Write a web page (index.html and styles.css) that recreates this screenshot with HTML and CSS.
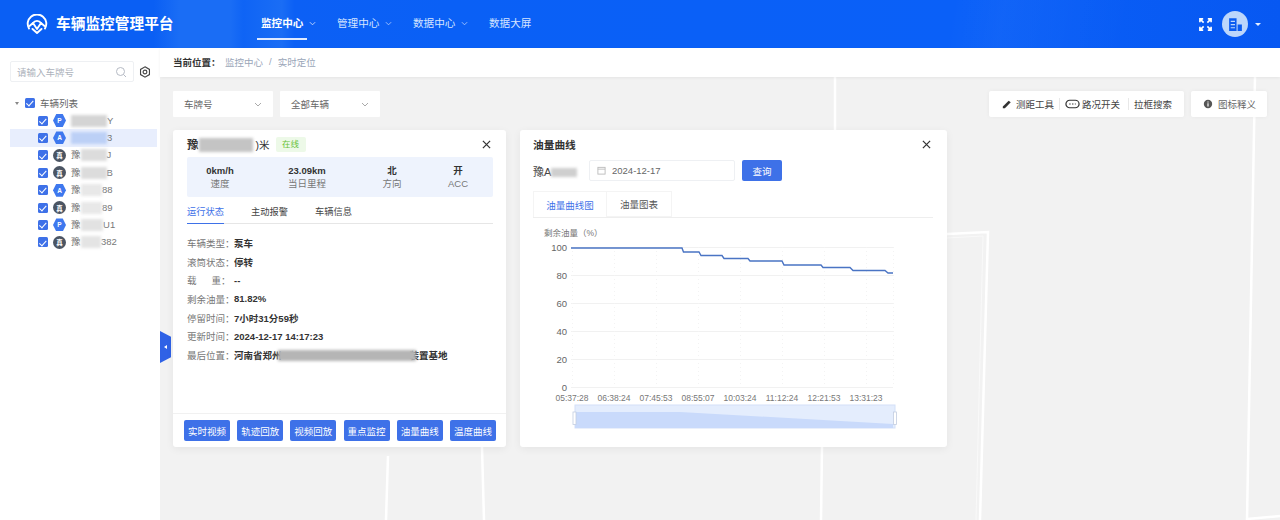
FILE: index.html
```html
<!DOCTYPE html>
<html lang="zh-CN">
<head>
<meta charset="utf-8">
<title>车辆监控管理平台</title>
<link rel="stylesheet" href="styles.css">
</head>
<body>
<div class="app">
  <header class="header">
    <div class="brand">
      <svg class="logo" viewBox="0 0 22 20" fill="none" stroke="#fff" stroke-width="1.9" stroke-linecap="round" stroke-linejoin="round"><path d="M3 14.500A9.300 9.300 0 1 1 19 14.500"/><path d="M7 9A4.800 4.800 0 0 1 15 9"/><path d="M3.500 12 7 9 11 15 15 9 18.500 12"/><path d="M6.500 15 11 19 15.500 15"/></svg>
      <span class="brand-name">车辆监控管理平台</span>
    </div>
    <nav class="nav">
      <a class="nav-item active">监控中心<svg class="nav-chev" viewBox="0 0 8 5" fill="none" stroke="currentColor"><path d="M1 1 4 4 7 1"/></svg></a>
      <a class="nav-item">管理中心<svg class="nav-chev" viewBox="0 0 8 5" fill="none" stroke="currentColor"><path d="M1 1 4 4 7 1"/></svg></a>
      <a class="nav-item">数据中心<svg class="nav-chev" viewBox="0 0 8 5" fill="none" stroke="currentColor"><path d="M1 1 4 4 7 1"/></svg></a>
      <a class="nav-item">数据大屏</a>
    </nav>
    <div class="user">
      <svg class="full" viewBox="0 0 14 14" fill="none" stroke="#fff" stroke-width="1.8"><path d="M1 4.500V1H4.500M1 1 5 5M9.500 1H13V4.500M13 1 9 5M1 9.500V13H4.500M1 13 5 9M13 9.500V13H9.500M13 13 9 9"/></svg>
      <div class="avatar"><svg viewBox="0 0 16 14"><path fill="#0b5cf0" d="M2 1H9V13H2zM10 7H14V13H10z"/><path fill="#bcd6fb" d="M3.500 3.500H7.500V4.600H3.500zM3.500 6.500H7.500V7.600H3.500zM3.500 9.500H7.500V10.600H3.500z"/></svg></div>
      <span class="caret"></span>
    </div>
  </header>
  <div class="content">
    <aside class="sidebar">
      <div class="search-row">
        <div class="search"><span>请输入车牌号</span><svg viewBox="0 0 12 12" fill="none" stroke="#b5bac4"><circle cx="5.500" cy="5.500" r="4"/><path d="M8.500 8.500 11 11"/></svg></div>
        <svg class="gear" viewBox="0 0 14 14" fill="none" stroke="#444" stroke-width="1.300"><path d="M7 1 12.200 4V10L7 13 1.800 10V4Z"/><circle cx="7" cy="7" r="2.200"/></svg>
      </div>
      <div class="tree">
        <div class="tree-row root"><span class="arrow"></span><span class="cb"></span><span>车辆列表</span></div>
        <div class="tree-row"><span class="cb"></span><span class="veh hex">P</span><span class="plate"><i class="mask m-36"></i>Y</span></div>
        <div class="tree-row selected"><span class="cb"></span><span class="veh hex">A</span><span class="plate"><i class="mask blue m-36"></i>3</span></div>
        <div class="tree-row"><span class="cb"></span><span class="veh dark">真</span><span class="plate">豫<i class="mask m-26"></i>J</span></div>
        <div class="tree-row"><span class="cb"></span><span class="veh dark">真</span><span class="plate">豫<i class="mask m-26"></i>B</span></div>
        <div class="tree-row"><span class="cb"></span><span class="veh hex">A</span><span class="plate">豫<i class="mask m-21"></i>88</span></div>
        <div class="tree-row"><span class="cb"></span><span class="veh dark">真</span><span class="plate">豫<i class="mask m-21"></i>89</span></div>
        <div class="tree-row"><span class="cb"></span><span class="veh hex">P</span><span class="plate">豫<i class="mask m-22"></i>U1</span></div>
        <div class="tree-row"><span class="cb"></span><span class="veh dark">真</span><span class="plate">豫<i class="mask m-20"></i>382</span></div>
      </div>
    </aside>
    <main class="main">
      <div class="crumb"><b>当前位置：</b><span>监控中心</span><em>/</em><span>实时定位</span></div>
      <div class="map">
        <svg class="roads" viewBox="160 77 1120 443" fill="none" stroke="#fff" stroke-width="2.500">
          <path d="M835 77V130"/>
          <path d="M947 234 988 232 980 520"/>
          <path d="M947 238 983 236 976 520" class="road-thin"/>
          <path d="M1255 77 1247 520"/>
          <path d="M1247 519 1280 516"/>
          <path d="M822 447 821 520"/>
          <path d="M388 456 386 520"/>
          <path d="M482 447 484 520"/>
        </svg>
        <div class="side-tab"><span></span></div>
        <div class="toolbar">
          <div class="selects">
            <div class="select"><span>车牌号</span><svg viewBox="0 0 8 5" fill="none" stroke="#aaa"><path d="M1 1 4 4 7 1"/></svg></div>
            <div class="select"><span>全部车辆</span><svg viewBox="0 0 8 5" fill="none" stroke="#aaa"><path d="M1 1 4 4 7 1"/></svg></div>
          </div>
          <div class="tools">
            <div class="tool-box">
              <span class="tool t-measure"><svg viewBox="0 0 12 12"><path fill="#333" d="M1 9 8 2 10.500 4 3.500 11H1z"/></svg>测距工具</span>
              <span class="tool t-traffic"><svg class="wide" viewBox="0 0 16 10" fill="none" stroke="#333" stroke-width="1.300"><rect x="1" y="1" width="14" height="8" rx="4"/><path d="M4.500 5H11.500" stroke-dasharray="1.500 1.500"/></svg>路况开关</span>
              <span class="tool">拉框搜索</span>
            </div>
            <div class="tool-box legend">
              <span class="tool"><svg viewBox="0 0 12 12"><circle cx="6" cy="6" r="5" fill="#555"/><path stroke="#fff" stroke-width="1.400" d="M6 5.200V9M6 3V4.300"/></svg>图标释义</span>
            </div>
          </div>
        </div>
        <div class="panels">
          <section class="panel info">
            <div class="info-head">
              <span class="info-title">豫<i class="mask m-54"></i><span class="title-end">)米</span></span><span class="tag">在线</span>
              <svg class="close" viewBox="0 0 10 10" fill="none" stroke="#333" stroke-width="1.400"><path d="M1 1 9 9M9 1 1 9"/></svg>
            </div>
            <div class="stats">
              <div class="stat"><b>0km/h</b><span>速度</span></div>
              <div class="stat"><b>23.09km</b><span>当日里程</span></div>
              <div class="stat"><b>北</b><span>方向</span></div>
              <div class="stat"><b>开</b><span>ACC</span></div>
            </div>
            <div class="tabs">
              <span class="tab active">运行状态</span><span class="tab">主动报警</span><span class="tab">车辆信息</span>
            </div>
            <dl class="rows">
              <div class="row"><dt>车辆类型：</dt><dd>泵车</dd></div>
              <div class="row"><dt>滚筒状态：</dt><dd>停转</dd></div>
              <div class="row"><dt class="spread"><span>载</span><span>重：</span></dt><dd>--</dd></div>
              <div class="row"><dt>剩余油量：</dt><dd>81.82%</dd></div>
              <div class="row"><dt>停留时间：</dt><dd>7小时31分59秒</dd></div>
              <div class="row"><dt>更新时间：</dt><dd>2024-12-17 14:17:23</dd></div>
              <div class="row"><dt>最后位置：</dt><dd>河南省郑州<i class="mask dim m-138"></i>装置基地</dd></div>
            </dl>
            <div class="actions">
              <button class="btn">实时视频</button><button class="btn">轨迹回放</button><button class="btn">视频回放</button><button class="btn">重点监控</button><button class="btn">油量曲线</button><button class="btn">温度曲线</button>
            </div>
          </section>
          <section class="panel oil">
            <div class="oil-head"><span>油量曲线</span><svg class="close" viewBox="0 0 10 10" fill="none" stroke="#333" stroke-width="1.400"><path d="M1 1 9 9M9 1 1 9"/></svg></div>
            <div class="query">
              <span class="plate-q">豫A<i class="mask m-30"></i></span>
              <div class="date"><svg viewBox="0 0 10 10" fill="none" stroke="#bbb"><rect x="1" y="1.500" width="8" height="7.500"/><path d="M1 3.500H9"/></svg>2024-12-17</div>
              <button class="btn query-btn">查询</button>
            </div>
            <div class="oil-tabs"><span class="oil-tab active">油量曲线图</span><span class="oil-tab">油量图表</span></div>
            <svg class="chart" viewBox="530 222 403 210">
              <text class="axis-name" x="544" y="236">剩余油量（%）</text>
              <g class="grid-h"><path d="M571 247.500H893M571 275.500H893M571 303.500H893M571 331.500H893M571 359.500H893M571 387.500H893"/></g>
              <g class="grid-v"><path d="M572.500 247V387M614.500 247V387M656.500 247V387M698.500 247V387M740.500 247V387M782.500 247V387M824.500 247V387M866.500 247V387M893.500 247V387"/></g>
              <g class="y-labels">
                <text x="567" y="250.500">100</text><text x="567" y="278.500">80</text><text x="567" y="306.500">60</text><text x="567" y="334.500">40</text><text x="567" y="362.500">20</text><text x="567" y="390.500">0</text>
              </g>
              <g class="x-labels">
                <text x="572" y="401">05:37:28</text><text x="614" y="401">06:38:24</text><text x="656" y="401">07:45:53</text><text x="698" y="401">08:55:07</text><text x="740" y="401">10:03:24</text><text x="782" y="401">11:12:24</text><text x="824" y="401">12:21:53</text><text x="866" y="401">13:31:23</text>
              </g>
              <path class="oil-line" d="M571 248H682L683.500 252H699L701 255.500H722L724 258.500H748L750 261H782L784 265H821L823 267.500H850L853 270.500H885L888 273H893"/>
              <rect class="zoom-bg" x="575" y="405" width="320" height="23"/>
              <path class="zoom-data" d="M575 412H680L893 424V428H575Z"/>
              <rect class="zoom-handle" x="573" y="412" width="3" height="12.500"/>
              <rect class="zoom-handle" x="893.500" y="412" width="3" height="12.500"/>
            </svg>
          </section>
        </div>
      </div>
    </main>
  </div>
</div>
</body>
</html>
```
FILE: styles.css
```css
* { box-sizing: border-box; }
html, body { margin: 0; padding: 0; }
body { font-family: "Liberation Sans", "Noto Sans CJK SC", sans-serif; font-size: 9.5px; color: #555; background: #f2f2f2; }
i, em { font-style: normal; }
.app { width: 1280px; height: 520px; display: flex; flex-direction: column; overflow: hidden; }

/* header */
.header { height: 48px; flex: none; display: flex; align-items: center; color: #fff;
  background:
    linear-gradient(100deg, rgba(255,255,255,0) 74%, rgba(255,255,255,.03) 78%, rgba(255,255,255,0) 88%),
    linear-gradient(90deg, #0a5ff4 0%, #0a5ff4 12%, #1a6df5 14%, #1a6df5 18%, #0f64f5 19%, #1a6df5 22%, #0c60f5 23%, #0a60f6 35%, #0a60f8 75%, #0758f2 100%); }
.brand { width: 257px; padding-left: 26px; display: flex; align-items: center; gap: 8px; flex: none; }
.logo { width: 22px; height: 20px; }
.brand-name { font-size: 14.7px; font-weight: 700; line-height: 20px; white-space: nowrap; }
.nav { display: flex; height: 48px; }
.nav-item { position: relative; width: 76px; padding: 0 0 2px 4px; display: flex; align-items: center; font-size: 10.6px; line-height: 48px; color: #d5e4ff; }
.nav-item.active { color: #fff; font-weight: 700; }
.nav-item.active::after { content: ""; position: absolute; left: 0; bottom: 8px; width: 50px; height: 2px; background: #dfeaff; }
.nav-chev { width: 7px; height: 5px; margin-left: 6px; opacity: .8; }
.user { margin-left: auto; padding-right: 19px; display: flex; align-items: center; }
.full { width: 13px; height: 13px; margin-right: 10px; }
.avatar { width: 26px; height: 26px; border-radius: 50%; background: #bcd6fb; display: flex; align-items: center; justify-content: center; }
.avatar svg { width: 17px; height: 15px; }
.caret { width: 0; height: 0; margin-left: 7px; border: 3px solid transparent; border-top: 3.5px solid #e6efff; border-bottom: 0; }

/* sidebar */
.content { flex: 1; display: flex; min-height: 0; }
.sidebar { width: 160px; flex: none; background: #fff; padding: 13px 3px 0 10px; }
.search-row { display: flex; align-items: center; gap: 5px; }
.search { width: 124px; height: 21px; border: 1px solid #eef0f3; border-radius: 2px; padding: 0 6px; display: flex; align-items: center; justify-content: space-between; color: #aeb3bc; }
.search svg { width: 12px; height: 12px; }
.gear { width: 12px; height: 12px; flex: none; }
.tree { margin-top: 12.5px; }
.tree-row { height: 17.4px; padding-left: 28px; display: flex; align-items: center; gap: 5px; color: #666; }
.tree-row.root { padding-left: 5px; }
.arrow { width: 0; height: 0; margin-right: 1px; border: 2.5px solid transparent; border-top: 3.5px solid #888; border-bottom: 0; }
.cb { width: 10px; height: 10px; flex: none; border-radius: 1.5px; background: #3e71e8; position: relative; }
.cb::after { content: ""; position: absolute; left: 3.2px; top: 1.2px; width: 3px; height: 5.5px; border: solid #fff; border-width: 0 1.2px 1.2px 0; transform: rotate(42deg); }
.veh { width: 13px; height: 13px; flex: none; display: flex; align-items: center; justify-content: center; color: #fff; font-size: 6.5px; font-weight: 700; }
.veh.hex { background: #3e78ee; clip-path: polygon(25% 0, 75% 0, 100% 50%, 75% 100%, 25% 100%, 0 50%); }
.veh.dark { background: #4b5563; border-radius: 50%; }
.plate { display: flex; align-items: center; font-size: 9.5px; color: #777; white-space: nowrap; line-height: 14px; }
.selected { background: #e8eefd; }
.mask { display: inline-block; height: 12px; background: #d4d4d4; filter: blur(1.5px); flex: none; }
.mask.blue { background: #bcd0f6; }
.mask.dim { background: #b5b5b5; height: 11px; vertical-align: -2px; margin: 0 -6px 0 -4px; }
.m-20 { width: 20.5px; background: #e4e4e4; }
.m-21 { width: 21.5px; background: #e8e8e8; }
.m-22 { width: 22.5px; background: #e2e2e2; }
.m-26 { width: 26px; background: #dcdcdc; }
.m-30 { width: 26px; background: #cfcfcf; height: 9px; vertical-align: -1px; }
.m-36 { width: 36px; }
.m-54 { width: 54px; background: #c4c4c4; height: 14px; vertical-align: -2px; }
.m-138 { width: 138px; }

/* main */
.main { flex: 1; display: flex; flex-direction: column; min-width: 0; }
.crumb { height: 29px; flex: none; background: #fff; padding: 0 0 2px 13px; display: flex; align-items: center; color: #9aa6b8; box-shadow: 0 1px 3px rgba(0,0,0,.06); position: relative; z-index: 1; }
.crumb b { color: #333; font-weight: 700; width: 52px; }
.crumb em { margin: 0 6px; }
.map { position: relative; flex: 1; min-height: 0; padding: 14px 13px 0; background: #f2f2f2; overflow: hidden; }
.roads { position: absolute; left: 0; top: 0; width: 1120px; height: 443px; }
.road-thin { stroke: #f9f9f9; stroke-width: 1; }
.side-tab { position: absolute; left: 0; top: 254px; width: 11px; height: 32px; background: #2f62e6; clip-path: polygon(0 0, 100% 18%, 100% 82%, 0 100%); display: flex; align-items: center; justify-content: center; }
.side-tab span { width: 0; height: 0; border: 2.5px solid transparent; border-right: 3px solid #fff; border-left: 0; }
.toolbar { position: relative; display: flex; justify-content: space-between; height: 26px; }
.selects { display: flex; gap: 7px; }
.select { width: 100px; height: 26px; background: #fff; padding: 0 11px; display: flex; align-items: center; justify-content: space-between; color: #666; border-radius: 1px; }
.select svg { width: 8px; height: 5px; }
.tools { display: flex; gap: 7px; }
.tool-box { height: 26px; background: #fff; border-radius: 2px; display: flex; align-items: center; padding: 0 12px 0 13px; box-shadow: 0 0 4px rgba(0,0,0,.05); }
.tool { display: flex; align-items: center; gap: 4px; color: #444; position: relative; white-space: nowrap; }
.t-measure { padding-right: 11px; }
.t-traffic { padding-right: 14px; gap: 2px; }
.tool:not(:last-child)::after { content: ""; position: absolute; right: 5px; top: 1px; bottom: 1px; width: 1px; background: #e8e8e8; }
.tool svg { width: 10px; height: 10px; }
.tool svg.wide { width: 15px; height: 10px; }
.legend { padding: 0 11px 0 12px; }
.legend .tool { color: #666; gap: 5px; }
.panels { position: relative; display: flex; gap: 14px; margin-top: 13px; align-items: flex-start; }
.panel { background: #fff; border-radius: 3px; box-shadow: 0 2px 8px rgba(0,0,0,.06); height: 317px; }

/* info panel */
.info { width: 333px; padding: 6px 13px 0 14px; display: flex; flex-direction: column; }
.info-head { height: 17px; display: flex; align-items: center; }
.info-title { font-size: 11.5px; font-weight: 700; color: #333; white-space: nowrap; display: flex; align-items: center; line-height: 16px; }
.title-end { font-weight: 400; font-size: 10.5px; margin-left: 3px; }
.tag { margin-left: 6px; width: 30px; height: 15px; background: #edf9e8; color: #67c23a; font-size: 8.5px; line-height: 15px; text-align: center; border-radius: 2px; }
.close { width: 9px; height: 9px; margin-left: auto; margin-right: 2px; }
.stats { height: 40px; margin-top: 4px; background: #eef3fd; display: grid; grid-template-columns: 66px 108px 62px 70px; text-align: center; align-content: center; border-radius: 2px; }
.stat { display: flex; flex-direction: column; align-items: center; line-height: 13px; }
.stat b { color: #333; font-weight: 700; }
.stat span { color: #777; }
.tabs { margin-top: 8px; height: 19px; display: flex; gap: 27px; border-bottom: 1px solid #e6e6e6; color: #444; line-height: 14px; font-size: 9.25px; }
.tab { position: relative; }
.tab.active { color: #3e71e8; }
.tab.active::after { content: ""; position: absolute; left: 0; right: 0; bottom: -1px; height: 1.5px; background: #3e71e8; }
.rows { margin: 9.5px 0 0; padding: 0; flex: 1; }
.row { display: flex; height: 18.7px; align-items: center; white-space: nowrap; }
dt { color: #777; width: 47px; flex: none; }
dt.spread { display: flex; justify-content: space-between; width: 43.5px; margin-right: 3.5px; }
dd { margin: 0; color: #333; font-weight: 700; }
.actions { margin: 0 -13px 0 -14px; height: 34px; border-top: 1px solid #f1f1f1; padding: 6px 10px 0 11px; display: flex; justify-content: space-between; }
.btn { width: 46px; height: 21px; border: 0; border-radius: 2px; padding: 0; background: #3e71e8; color: #fff; font: inherit; font-size: 9.5px; }

/* oil panel */
.oil { width: 427px; padding: 6px 14px 0 13px; }
.oil-head { height: 17px; display: flex; align-items: center; justify-content: space-between; font-size: 10.7px; font-weight: 700; color: #333; }
.query { margin-top: 7px; height: 21px; display: flex; align-items: center; }
.plate-q { width: 56px; flex: none; font-size: 11px; color: #444; white-space: nowrap; }
.date { width: 146px; height: 21px; border: 1px solid #eef0f3; border-radius: 2px; padding-left: 7px; display: flex; align-items: center; gap: 6px; color: #666; }
.date svg { width: 9px; height: 9px; }
.query-btn { width: 40px; margin-left: 7px; }
.oil-tabs { margin-top: 10px; height: 27px; display: flex; border-bottom: 1px solid #eeeeee; }
.oil-tab { width: 66px; height: 26px; border: 1px solid #f4f4f4; display: flex; align-items: center; justify-content: center; color: #555; }
.oil-tab.active { width: 73px; color: #3e71e8; border-bottom: 0; border-right: 0; }
.chart { display: block; width: 403px; height: 210px; margin: 4px 0 0 -3px; overflow: visible; font-family: "Liberation Sans", "Noto Sans CJK SC", sans-serif; }
.axis-name { font-size: 8.5px; fill: #777; }
.grid-h, .grid-v { fill: none; stroke: #f1f1f1; stroke-width: 1; }
.grid-v { stroke: #f3f3f3; stroke-dasharray: 1 3; }
.y-labels text { font-size: 9.5px; fill: #666; text-anchor: end; }
.x-labels text { font-size: 8.5px; fill: #777; text-anchor: middle; }
.oil-line { fill: none; stroke: #4a74c4; stroke-width: 1.4; }
.zoom-bg { fill: #e4edfd; stroke: #d3e0f8; }
.zoom-data { fill: #c9dafb; }
.zoom-handle { fill: #fff; stroke: #c2cde0; stroke-width: .8; }
```
